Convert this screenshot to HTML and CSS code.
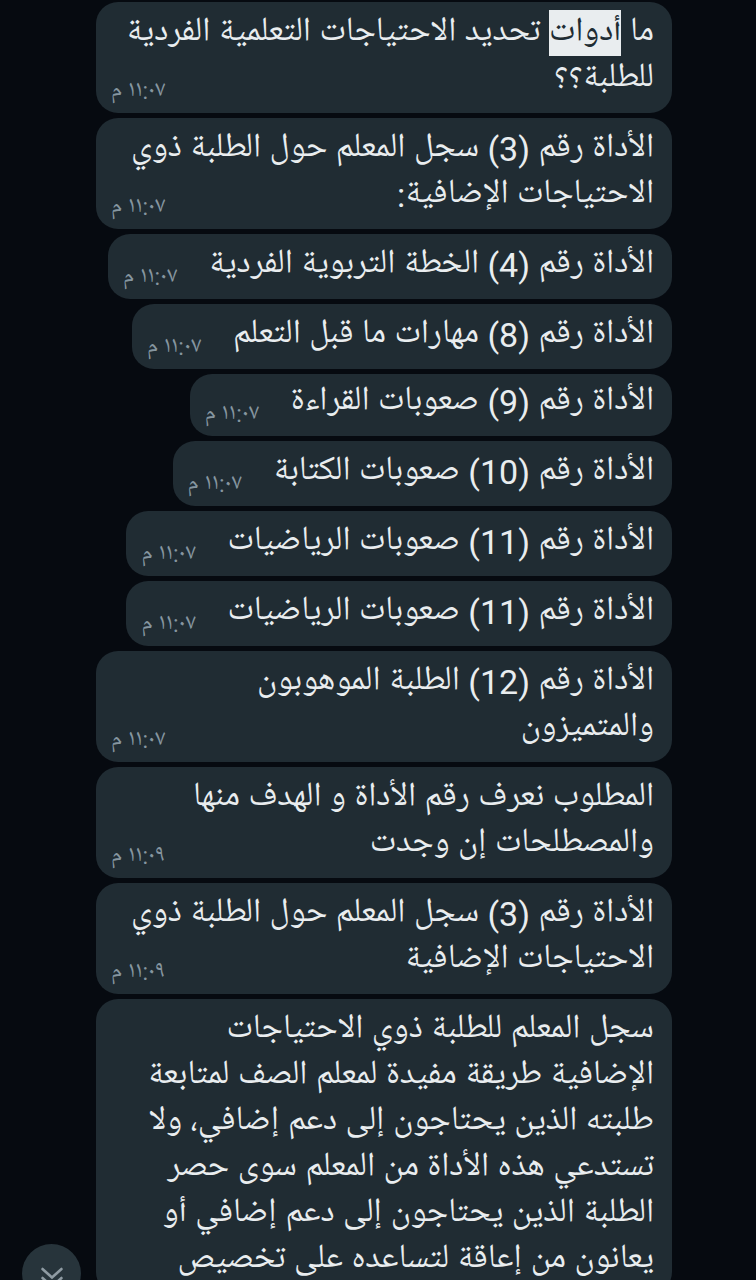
FILE: index.html
```
<!DOCTYPE html>
<html lang="ar" dir="rtl">
<head>
<meta charset="utf-8">
<meta name="viewport" content="width=device-width, initial-scale=1">
<title>محادثة</title>
<link rel="stylesheet" href="styles.css">
</head>
<body>
<main class="chat">
  <article class="bubble"><p class="text">ما <mark class="hit">أدوات</mark> تحديد الاحتياجات التعلمية الفردية للطلبة؟؟<span class="spacer"></span></p><time class="time">١١:٠٧ م</time></article>
  <article class="bubble"><p class="text">الأداة رقم (3) سجل المعلم حول الطلبة ذوي الاحتياجات الإضافية:<span class="spacer"></span></p><time class="time">١١:٠٧ م</time></article>
  <article class="bubble"><p class="text">الأداة رقم (4) الخطة التربوية الفردية<span class="spacer"></span></p><time class="time">١١:٠٧ م</time></article>
  <article class="bubble"><p class="text">الأداة رقم (8) مهارات ما قبل التعلم<span class="spacer"></span></p><time class="time">١١:٠٧ م</time></article>
  <article class="bubble bubble-compact"><p class="text">الأداة رقم (9) صعوبات القراءة<span class="spacer"></span></p><time class="time">١١:٠٧ م</time></article>
  <article class="bubble"><p class="text">الأداة رقم (10) صعوبات الكتابة<span class="spacer"></span></p><time class="time">١١:٠٧ م</time></article>
  <article class="bubble"><p class="text">الأداة رقم (11) صعوبات الرياضيات<span class="spacer"></span></p><time class="time">١١:٠٧ م</time></article>
  <article class="bubble"><p class="text">الأداة رقم (11) صعوبات الرياضيات<span class="spacer"></span></p><time class="time">١١:٠٧ م</time></article>
  <article class="bubble"><p class="text">الأداة رقم (12) الطلبة الموهوبون والمتميزون<span class="spacer"></span></p><time class="time">١١:٠٧ م</time></article>
  <article class="bubble"><p class="text">المطلوب نعرف رقم الأداة و الهدف منها والمصطلحات إن وجدت<span class="spacer"></span></p><time class="time">١١:٠٩ م</time></article>
  <article class="bubble"><p class="text">الأداة رقم (3) سجل المعلم حول الطلبة ذوي الاحتياجات الإضافية<span class="spacer"></span></p><time class="time">١١:٠٩ م</time></article>
  <article class="bubble"><p class="text">سجل المعلم للطلبة ذوي الاحتياجات الإضافية طريقة مفيدة لمعلم الصف لمتابعة طلبته الذين يحتاجون إلى دعم إضافي، ولا تستدعي هذه الأداة من المعلم سوى حصر الطلبة الذين يحتاجون إلى دعم إضافي أو يعانون من إعاقة لتساعده على تخصيص</p></article>
</main>
<button class="jump" type="button" aria-label="الانتقال إلى الأسفل">
  <svg class="jump-icon" viewBox="0 0 24 24" fill="none" stroke="currentColor" stroke-width="2.6" stroke-linecap="round"><path d="M2.500 7l9.500 8.500 9.500-8.500M2.500 16l9.500 8.500 9.500-8.500"/></svg>
</button>
</body>
</html>
```
FILE: styles.css
```
* { box-sizing: border-box; }

body {
  margin: 0;
  height: 100vh;
  overflow: hidden;
  background: #060a10;
  color: #e9edef;
  font-family: Roboto, "Noto Naskh Arabic UI", "Noto Naskh Arabic", "DejaVu Sans", sans-serif;
  font-size: 34px;
  line-height: 46px;
}

.chat {
  display: flex;
  flex-direction: column;
  align-items: flex-start;
  gap: 5px;
  padding: 2px 84px 0 96px;
}

.bubble {
  display: grid;
  flex-shrink: 0;
  max-width: 100%;
  padding: 8px 18px 11px 15px;
  border-radius: 22px;
  background: #202c33;
}

.bubble-compact { padding: 5px 18px 11px 15px; }

.text {
  grid-area: 1 / 1;
  margin: 0;
  padding-left: 10px;
}

.hit {
  display: inline-block;
  background: #e9edef;
  color: #202c33;
}

.spacer {
  display: inline-block;
  width: 76px;
}

.time {
  grid-area: 1 / 1;
  place-self: end;
  margin-bottom: -5px;
  color: #8696a0;
  font-size: 23px;
  line-height: 30px;
}

.jump {
  position: fixed;
  left: 22px;
  bottom: -23px;
  display: grid;
  place-items: center;
  width: 59px;
  height: 59px;
  padding: 0;
  border: 0;
  border-radius: 50%;
  background: #27343b;
  color: #8f9ba3;
}

.jump-icon {
  width: 24px;
  height: 24px;
  overflow: visible;
}
```
